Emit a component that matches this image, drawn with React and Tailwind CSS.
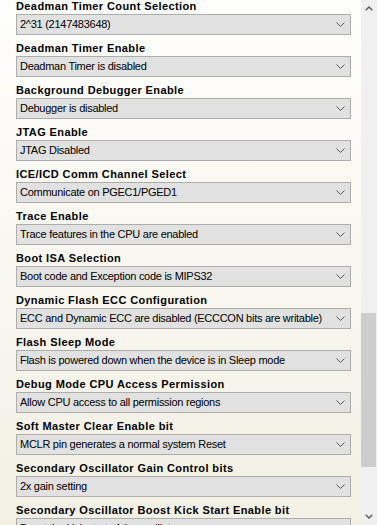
import React from "react";

const items = [
  ["Deadman Timer Count Selection", "2^31 (2147483648)"],
  ["Deadman Timer Enable", "Deadman Timer is disabled"],
  ["Background Debugger Enable", "Debugger is disabled"],
  ["JTAG Enable", "JTAG Disabled"],
  ["ICE/ICD Comm Channel Select", "Communicate on PGEC1/PGED1"],
  ["Trace Enable", "Trace features in the CPU are enabled"],
  ["Boot ISA Selection", "Boot code and Exception code is MIPS32"],
  ["Dynamic Flash ECC Configuration", "ECC and Dynamic ECC are disabled (ECCCON bits are writable)"],
  ["Flash Sleep Mode", "Flash is powered down when the device is in Sleep mode"],
  ["Debug Mode CPU Access Permission", "Allow CPU access to all permission regions"],
  ["Soft Master Clear Enable bit", "MCLR pin generates a normal system Reset"],
  ["Secondary Oscillator Gain Control bits", "2x gain setting"],
  ["Secondary Oscillator Boost Kick Start Enable bit", "Boost the kick start of the oscillator"],
];

function Chevron() {
  return (
    <svg width="9" height="5" viewBox="0 0 9 5" className="shrink-0">
      <path d="M0.5 0.5 L4.5 4.5 L8.5 0.5" fill="none" stroke="#5a5a5a" strokeWidth="1" />
    </svg>
  );
}

export default function App() {
  return (
    <div
      className="w-[377px] h-[525px] overflow-hidden flex"
      style={{ fontFamily: '"Liberation Sans", Arial, sans-serif' }}
    >
      <div className="w-[361px] h-full bg-gradient-to-b from-[#fefefd] to-[#f3f0e4] pl-4 pr-[10px]">
        <div className="-mt-px flex flex-col gap-[6px]">
          {items.map(([label, value]) => (
            <div key={label} className="flex flex-col">
              <div className="h-[15px] leading-[15px] text-[11px] font-bold tracking-[0.4px] text-black whitespace-nowrap">
                {label}
              </div>
              <div className="h-[21px] border border-[#adadad] bg-[#e1e1e1] flex items-center pl-[3px] pr-[5px]">
                <span className="flex-1 text-[11px] leading-[19px] tracking-[-0.27px] text-black whitespace-nowrap overflow-hidden">
                  {value}
                </span>
                <Chevron />
              </div>
            </div>
          ))}
        </div>
      </div>
      <div className="w-4 h-full bg-[#f0f0f0] flex flex-col">
        <div className="h-[17px] flex items-center justify-center">
          <svg width="8" height="5" viewBox="0 0 8 5">
            <path d="M0.7 4.3 L4 1 L7.3 4.3" fill="none" stroke="#606060" strokeWidth="1.5" />
          </svg>
        </div>
        <div className="flex-1 flex flex-col pt-[296px]">
          <div className="w-[15px] h-[154px] bg-[#cdcdcd]" />
        </div>
        <div className="h-[17px] flex items-center justify-center">
          <svg width="8" height="5" viewBox="0 0 8 5">
            <path d="M0.7 0.7 L4 4 L7.3 0.7" fill="none" stroke="#606060" strokeWidth="1.5" />
          </svg>
        </div>
      </div>
    </div>
  );
}
